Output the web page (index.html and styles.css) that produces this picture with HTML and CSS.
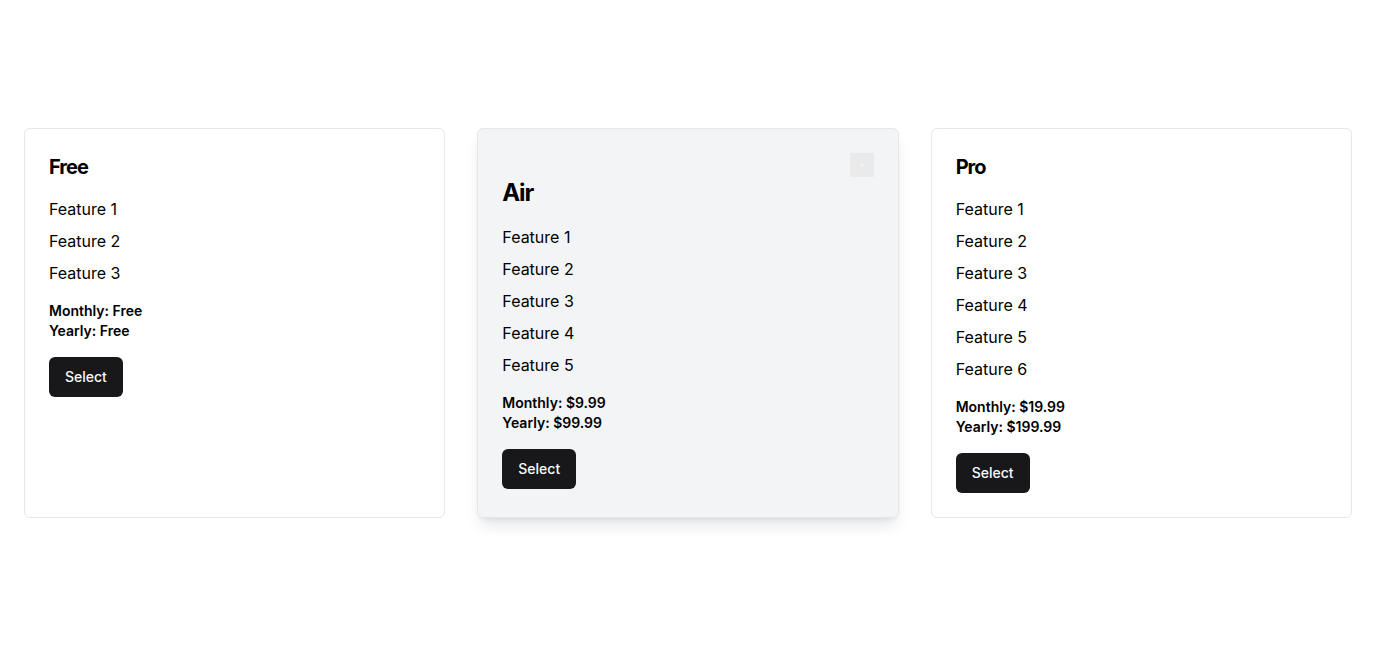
FILE: index.html
```html
<!DOCTYPE html>
<html lang="en">
<head>
<meta charset="utf-8">
<meta name="viewport" content="width=device-width, initial-scale=1">
<title>Plans</title>
<link rel="stylesheet" href="styles.css">
</head>
<body>
<main class="plans">
  <section class="card">
    <h2 class="title">Free</h2>
    <ul class="features">
      <li>Feature 1</li>
      <li>Feature 2</li>
      <li>Feature 3</li>
    </ul>
    <div class="prices">
      <p>Monthly: Free</p>
      <p>Yearly: Free</p>
    </div>
    <button class="select" type="button">Select</button>
  </section>
  <section class="card card-featured">
    <svg class="badge" viewBox="0 0 24 24" aria-hidden="true">
      <rect width="24" height="24" fill="#eaeaea"/>
      <rect x="10" y="10" width="4" height="4" rx="1" fill="#eeeeee"/>
      <rect x="11" y="11" width="2" height="2" fill="#f5f5f5"/>
    </svg>
    <h2 class="title title-large">Air</h2>
    <ul class="features">
      <li>Feature 1</li>
      <li>Feature 2</li>
      <li>Feature 3</li>
      <li>Feature 4</li>
      <li>Feature 5</li>
    </ul>
    <div class="prices">
      <p>Monthly: $9.99</p>
      <p>Yearly: $99.99</p>
    </div>
    <button class="select" type="button">Select</button>
  </section>
  <section class="card">
    <h2 class="title">Pro</h2>
    <ul class="features">
      <li>Feature 1</li>
      <li>Feature 2</li>
      <li>Feature 3</li>
      <li>Feature 4</li>
      <li>Feature 5</li>
      <li>Feature 6</li>
    </ul>
    <div class="prices">
      <p>Monthly: $19.99</p>
      <p>Yearly: $199.99</p>
    </div>
    <button class="select" type="button">Select</button>
  </section>
</main>
</body>
</html>
```
FILE: styles.css
```css
* {
  box-sizing: border-box;
  margin: 0;
  padding: 0;
}

body {
  background: #fff;
  color: #000;
  font-family: Inter, "Liberation Sans", sans-serif;
  font-size: 16px;
  line-height: 24px;
}

.plans {
  display: grid;
  grid-template-columns: repeat(3, 1fr);
  gap: 32px;
  align-content: center;
  min-height: 100vh;
  padding: 24px;
}

.card {
  padding: 24px;
  border: 1px solid #e5e7eb;
  border-radius: 6px;
}

.card-featured {
  display: flex;
  flex-direction: column;
  align-items: flex-start;
  background: #f3f4f6;
  box-shadow: 0 10px 15px -3px rgb(0 0 0 / 0.1), 0 4px 6px -4px rgb(0 0 0 / 0.1);
}

.badge {
  display: block;
  align-self: flex-end;
  width: 24px;
  height: 24px;
}

.title {
  margin-bottom: 16px;
  font-size: 20px;
  font-weight: 700;
  line-height: 28px;
  letter-spacing: -0.05em;
}

.title-large {
  font-size: 24px;
  line-height: 32px;
}

.features {
  display: grid;
  gap: 8px;
  margin-bottom: 16px;
  list-style: none;
}

.prices {
  margin-bottom: 16px;
  font-size: 14px;
  font-weight: 600;
  line-height: 20px;
}

.select {
  height: 40px;
  padding: 0 16px;
  border: 0;
  border-radius: 6px;
  background: #18181b;
  color: #fafafa;
  font: 500 14px/20px Inter, "Liberation Sans", sans-serif;
  cursor: pointer;
}
```
